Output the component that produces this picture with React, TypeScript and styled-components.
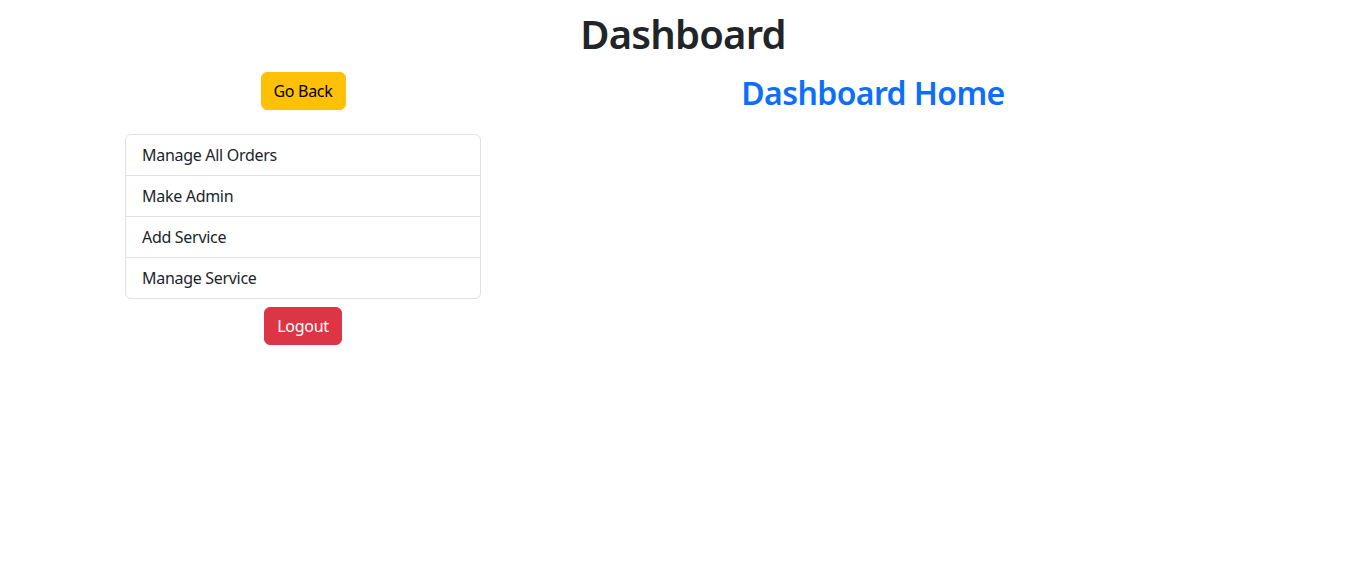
import React from "react";
import styled, { createGlobalStyle } from "styled-components";

const Global = createGlobalStyle`
  *, *::before, *::after { box-sizing: border-box; }
  body {
    margin: 0;
    font-family: "Segoe UI", "Noto Sans", sans-serif;
    font-size: 16px;
    line-height: 1.5;
    color: #212529;
    background: #fff;
  }
`;

const Title = styled.h1`
  margin: 10px 0 8px;
  font-size: 40px;
  font-weight: 600;
  line-height: 1.2;
  letter-spacing: -0.8px;
  text-align: center;
  color: #212529;
`;

const Container = styled.div`
  width: 1140px;
  margin: 0 auto;
  padding: 0 12px;
`;

const Row = styled.div`
  display: grid;
  grid-template-columns: 356px 1fr;
  column-gap: 24px;
`;

const Side = styled.div`
  display: flex;
  flex-direction: column;
  align-items: center;
  padding-top: 6px;
`;

const Button = styled.button<{ $variant: "warning" | "danger" }>`
  font-family: inherit;
  font-size: 16px;
  line-height: 1.5;
  letter-spacing: -0.3px;
  padding: 6px 12px;
  border-radius: 6px;
  border: 1px solid ${(p) => (p.$variant === "warning" ? "#ffc107" : "#dc3545")};
  background: ${(p) => (p.$variant === "warning" ? "#ffc107" : "#dc3545")};
  color: ${(p) => (p.$variant === "warning" ? "#000" : "#fff")};
  cursor: pointer;
`;

const List = styled.ul`
  list-style: none;
  margin: 24px 0 8px;
  padding: 0;
  width: 100%;
  border: 1px solid #dee2e6;
  border-radius: 6px;
`;

const Item = styled.li`
  padding: 8px 16px;
  line-height: 24px;
  letter-spacing: -0.3px;
  color: #212529;
  & + & { border-top: 1px solid #dee2e6; }
`;

const Main = styled.div`
  text-align: center;
`;

const SubTitle = styled.h2`
  margin: 8px 0 0;
  font-size: 32px;
  font-weight: 600;
  line-height: 1.2;
  letter-spacing: -0.6px;
  color: #0d6efd;
`;

export default function App() {
  return (
    <>
      <Global />
      <Title>Dashboard</Title>
      <Container>
        <Row>
          <Side>
            <Button $variant="warning">Go Back</Button>
            <List>
              <Item>Manage All Orders</Item>
              <Item>Make Admin</Item>
              <Item>Add Service</Item>
              <Item>Manage Service</Item>
            </List>
            <Button $variant="danger">Logout</Button>
          </Side>
          <Main>
            <SubTitle>Dashboard Home</SubTitle>
          </Main>
        </Row>
      </Container>
    </>
  );
}
